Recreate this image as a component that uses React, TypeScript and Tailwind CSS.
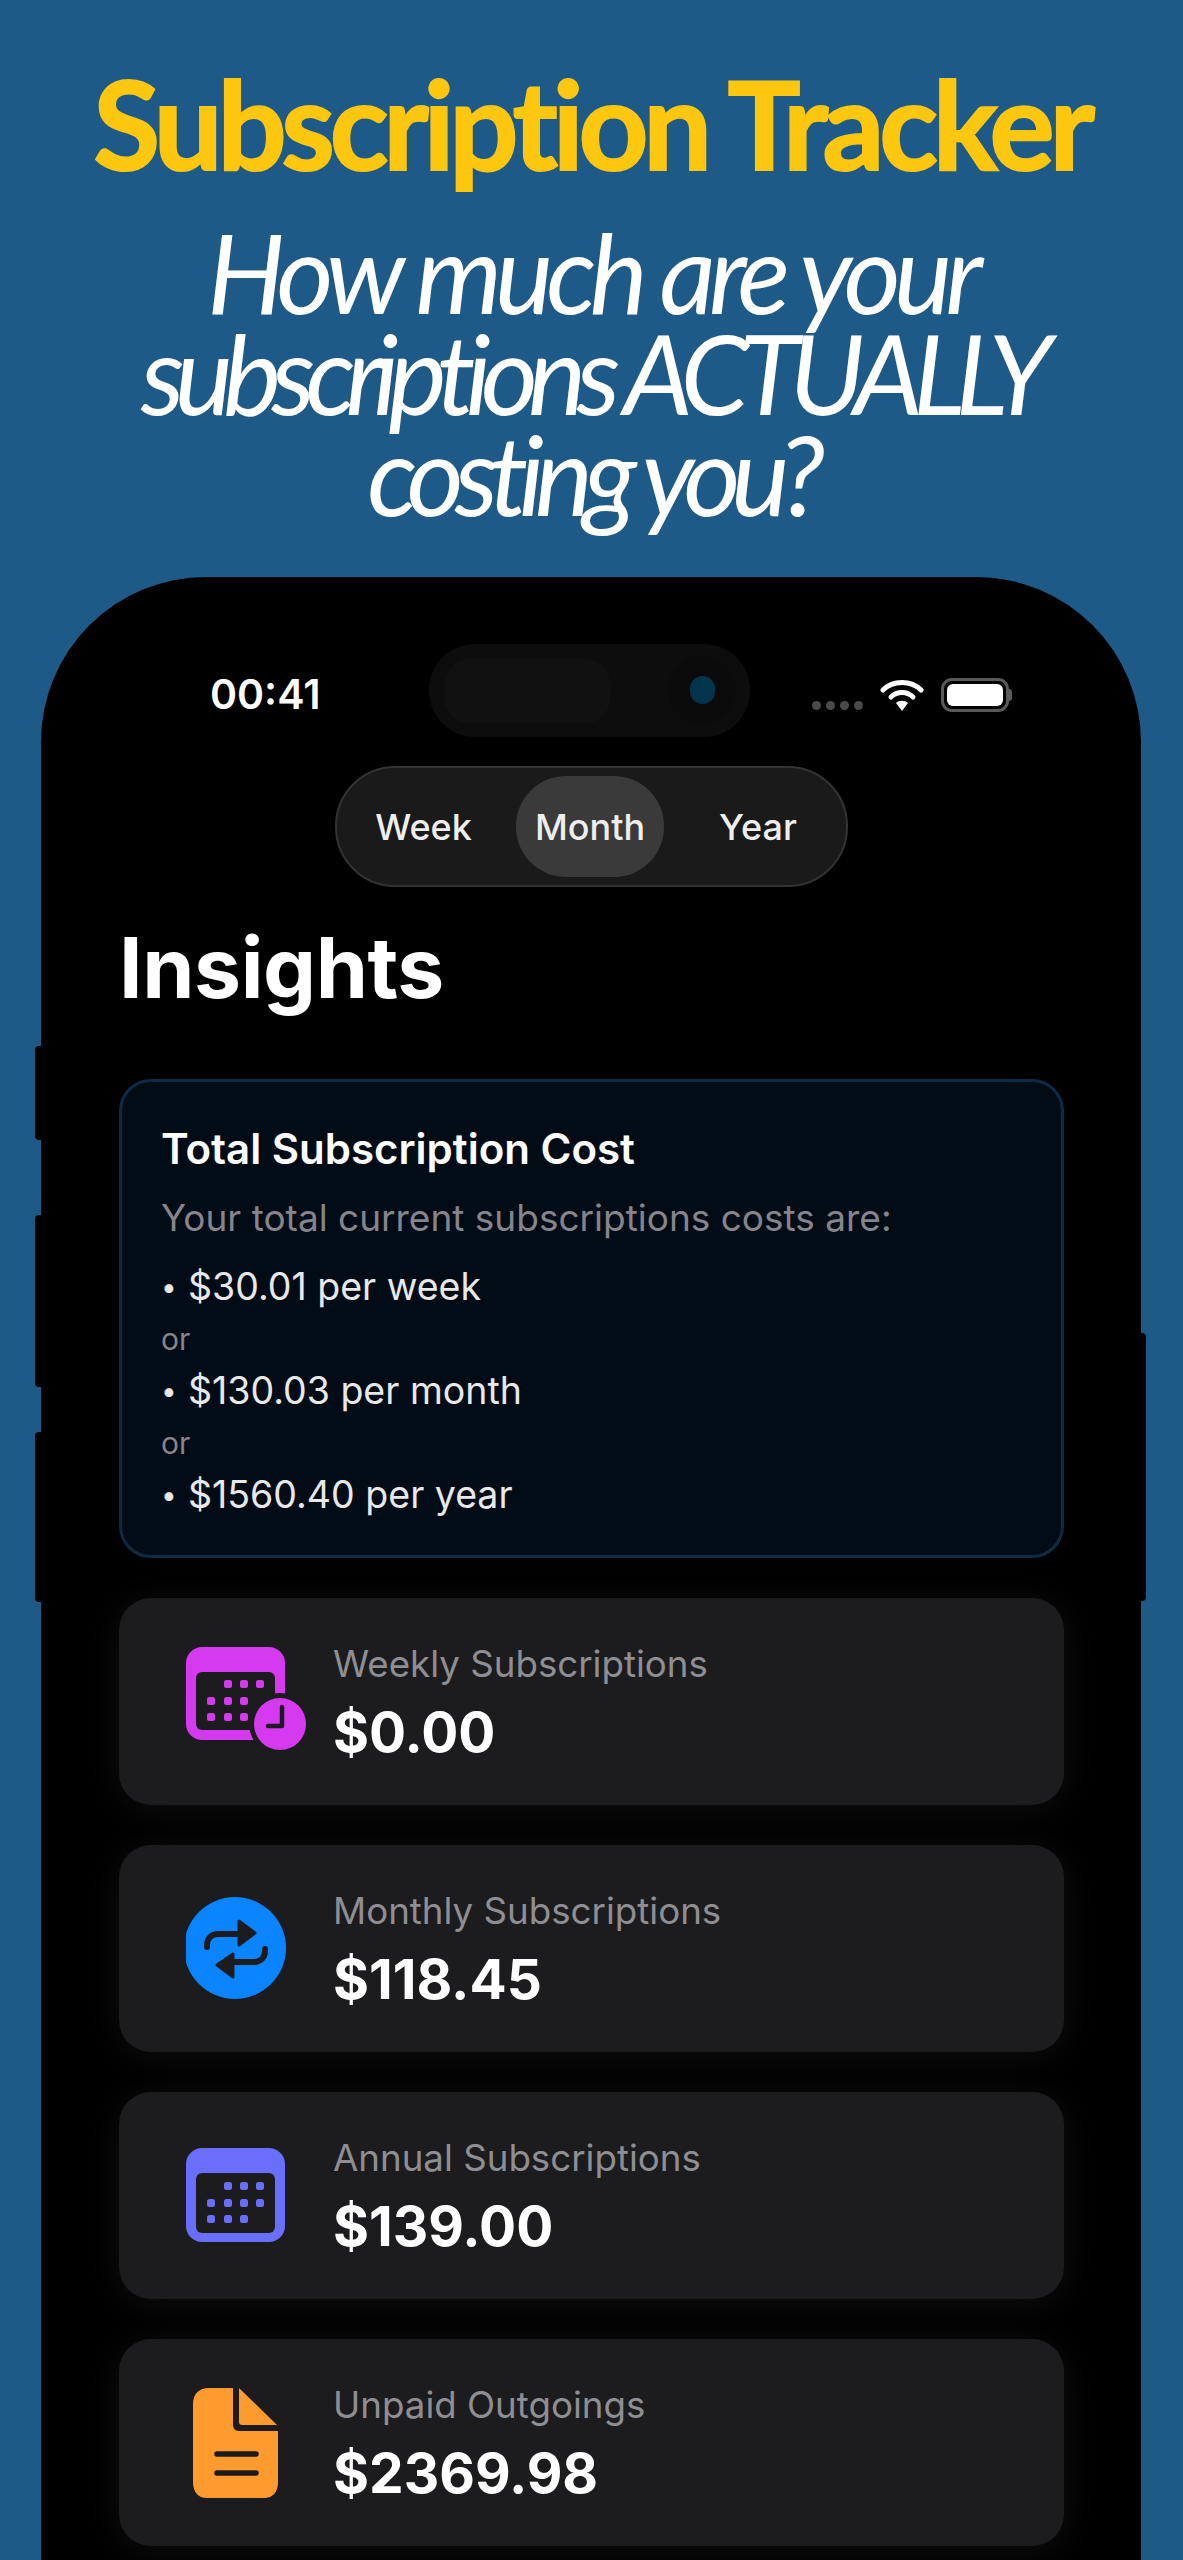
import React from "react";

const cards = [
  { label: "Weekly Subscriptions", value: "$0.00", icon: "weekly" },
  { label: "Monthly Subscriptions", value: "$118.45", icon: "monthly" },
  { label: "Annual Subscriptions", value: "$139.00", icon: "annual" },
  { label: "Unpaid Outgoings", value: "$2369.98", icon: "unpaid" },
];

const CARD = "#1c1c1e";

function CalendarDots({ dots, color }: { dots: number[][]; color: string }) {
  return (
    <>
      {dots.map(([x, y]) => (
        <rect key={`${x}-${y}`} x={x - 4} y={y - 4} width="8" height="8" rx="2.5" fill={color} />
      ))}
    </>
  );
}

function RowIcon({ name }: { name: string }) {
  if (name === "weekly") {
    const c = "#d63af0";
    return (
      <svg viewBox="0 0 120 120" className="w-[120px] h-[120px] shrink-0">
        <rect x="0" y="9" width="99" height="93" rx="16" fill={c} />
        <rect x="10" y="34" width="79" height="58" rx="6" fill={CARD} />
        <CalendarDots
          color={c}
          dots={[[42, 46], [58, 46], [74, 46], [25, 63], [42, 63], [58, 63], [25, 79], [42, 79], [58, 79]]}
        />
        <circle cx="94" cy="86" r="31" fill={CARD} />
        <circle cx="94" cy="86" r="26" fill={c} />
        <path d="M96 69V88H82" fill="none" stroke={CARD} strokeWidth="4.5" strokeLinecap="round" strokeLinejoin="round" />
      </svg>
    );
  }
  if (name === "monthly") {
    return (
      <svg viewBox="0 0 120 120" className="w-[120px] h-[120px] shrink-0">
        <circle cx="49" cy="63" r="51" fill="#0a84ff" />
        <path d="M21 62V60C21 53 26 49 32 49H56" fill="none" stroke={CARD} strokeWidth="6" strokeLinecap="round" />
        <path d="M53 36L69 48L53 60Z" fill={CARD} stroke={CARD} strokeWidth="3" strokeLinejoin="round" />
        <path d="M79 64V66C79 73 74 77 68 77H44" fill="none" stroke={CARD} strokeWidth="6" strokeLinecap="round" />
        <path d="M47 69L31 80L47 92Z" fill={CARD} stroke={CARD} strokeWidth="3" strokeLinejoin="round" />
      </svg>
    );
  }
  if (name === "annual") {
    const c = "#6a6ffb";
    return (
      <svg viewBox="0 0 120 120" className="w-[120px] h-[120px] shrink-0">
        <rect x="0" y="16" width="99" height="94" rx="16" fill={c} />
        <rect x="10" y="41" width="79" height="60" rx="6" fill={CARD} />
        <CalendarDots
          color={c}
          dots={[[42, 54], [58, 54], [74, 54], [25, 71], [42, 71], [58, 71], [74, 71], [25, 87], [42, 87], [58, 87]]}
        />
      </svg>
    );
  }
  const c = "#ff9a2e";
  return (
    <svg viewBox="0 0 120 120" className="w-[120px] h-[120px] shrink-0">
      <path d="M23 9H47V46C47 49 49 52 53 52H92V103C92 113 87 119 78 119H21C12 119 7 113 7 103V25C7 15 13 9 23 9Z" fill={c} />
      <path d="M53 9L91 46H56C54 46 53 45 53 43Z" fill={c} />
      <path d="M31 75H70M31 94H70" fill="none" stroke={CARD} strokeWidth="5.5" strokeLinecap="round" />
    </svg>
  );
}

function StatusIcons() {
  return (
    <div className="flex items-start">
      <div className="flex gap-[5px] ml-[62px] mt-[57px]">
        <span className="w-[9px] h-[9px] rounded-full bg-[#4a4a4a]" />
        <span className="w-[9px] h-[9px] rounded-full bg-[#4a4a4a]" />
        <span className="w-[9px] h-[9px] rounded-full bg-[#4a4a4a]" />
        <span className="w-[9px] h-[9px] rounded-full bg-[#4a4a4a]" />
      </div>
      <svg viewBox="0 0 44 34" className="w-[44px] h-[34px] ml-[17px] mt-[34px] shrink-0">
        <path d="M3 12C13 2 31 2 41 12" fill="none" stroke="#fff" strokeWidth="5" strokeLinecap="round" />
        <path d="M11 19C17 13 27 13 33 19" fill="none" stroke="#fff" strokeWidth="5" strokeLinecap="round" />
        <path d="M16 25C19 22 25 22 28 25L22 33Z" fill="#fff" />
      </svg>
      <div className="flex items-center ml-[17px] mt-[34px]">
        <div className="w-[68px] h-[34px] rounded-[11px] border-[3px] border-[#5a5a5a] p-[3px]">
          <div className="w-full h-full rounded-[6px] bg-white" />
        </div>
        <span className="w-[3px] h-[12px] rounded-r-full bg-[#5a5a5a]" />
      </div>
    </div>
  );
}

export default function App() {
  return (
    <div className="relative w-[1183px] h-[2560px] overflow-hidden bg-[#1e5a87] font-['Inter',sans-serif]">
      {/* Headline */}
      <header className="h-[577px] pt-[58px] text-center font-['Lato',sans-serif]">
        <h1 className="text-[122px] leading-[130px] font-bold tracking-[-0.043em] [-webkit-text-stroke:2px_#fec70f] text-[#fec70f]">
          Subscription Tracker
        </h1>
        <div className="mt-[33px] text-[110px] leading-[101px] italic font-normal text-white">
          <p className="tracking-[-0.063em]">How much are your</p>
          <p className="tracking-[-0.09em]">subscriptions ACTUALLY</p>
          <p className="tracking-[-0.085em]">costing you?</p>
        </div>
      </header>

      {/* Side buttons */}
      <div className="absolute left-[35px] top-[1046px] w-[7px] h-[94px] rounded-l-[4px] bg-black" />
      <div className="absolute left-[35px] top-[1215px] w-[7px] h-[172px] rounded-l-[4px] bg-black" />
      <div className="absolute left-[35px] top-[1432px] w-[7px] h-[170px] rounded-l-[4px] bg-black" />
      <div className="absolute left-[1139px] top-[1333px] w-[7px] h-[268px] rounded-r-[4px] bg-black" />

      {/* Phone */}
      <div className="mx-[41px] w-[1100px] h-[1983px] rounded-t-[165px] bg-black pl-[78px] pr-[77px] pt-[67px]">
        <div className="flex h-[93px]">
          <div className="w-[310px] pl-[91px] pt-[26px] text-[41px] leading-[48px] font-semibold text-white">00:41</div>
          <div className="flex items-center w-[321px] h-[93px] rounded-[46px] bg-[#0d0d0d] pl-[16px]">
            <div className="w-[165px] h-[64px] rounded-[24px] bg-[#111111]" />
            <div className="flex items-center justify-center w-[68px] h-[68px] ml-[58px] -mt-[2px] rounded-full bg-[#0b0b0b]">
              <span className="w-[25px] h-[28px] rounded-full bg-[#03344e]" />
            </div>
          </div>
          <StatusIcons />
        </div>

        {/* Period switch */}
        <div className="flex items-center mx-auto mt-[29px] w-[513px] h-[121px] rounded-[60px] border-[2px] border-[#333] bg-[#1a1a1a] p-[8px] text-[36px] font-medium text-[#eee]">
          <div className="flex items-center justify-center w-[171px] h-[101px] pr-[14px]">Week</div>
          <div className="flex items-center justify-center w-[148px] h-[101px] rounded-[50px] bg-[#3a3a3a]">Month</div>
          <div className="flex items-center justify-center w-[174px] h-[101px] pl-[14px]">Year</div>
        </div>

        <h2 className="mt-[41px] mb-[71px] text-[84px] leading-[80px] font-bold tracking-[-0.005em] text-white">Insights</h2>

        {/* Total cost */}
        <section className="h-[479px] rounded-[32px] border-[3px] border-[#0f2a45] bg-[#020c16] pl-[39px] pt-[41px]">
          <h3 className="text-[42px] leading-[52px] font-semibold text-white">Total Subscription Cost</h3>
          <p className="mt-[17px] text-[37px] leading-[52px] text-[#85858b]">Your total current subscriptions costs are:</p>
          <p className="flex mt-[17px] text-[37.5px] leading-[52px] text-[#e8e8e8]">
            <span className="w-[27px] text-[28px]">•</span>$30.01 per week
          </p>
          <p className="text-[30px] leading-[52px] text-[#85858b]">or</p>
          <p className="flex text-[37.5px] leading-[52px] text-[#e8e8e8]">
            <span className="w-[27px] text-[28px]">•</span>$130.03 per month
          </p>
          <p className="text-[30px] leading-[52px] text-[#85858b]">or</p>
          <p className="flex text-[37.5px] leading-[52px] text-[#e8e8e8]">
            <span className="w-[27px] text-[28px]">•</span>$1560.40 per year
          </p>
        </section>

        {/* Summary rows */}
        <div className="flex flex-col gap-[40px] mt-[40px]">
          {cards.map((card) => (
            <div
              key={card.label}
              className="flex items-start h-[207px] rounded-[32px] bg-[#1c1c1e] shadow-[0_4px_40px_rgba(255,255,255,0.06)] pl-[67px] pt-[40px]"
            >
              <RowIcon name={card.icon} />
              <div className="ml-[27px]">
                <p className="text-[36.7px] leading-[52px] text-[#8e8e93]">{card.label}</p>
                <p className="mt-[9px] text-[55px] leading-[66px] font-bold text-white">{card.value}</p>
              </div>
            </div>
          ))}
        </div>
      </div>
    </div>
  );
}
